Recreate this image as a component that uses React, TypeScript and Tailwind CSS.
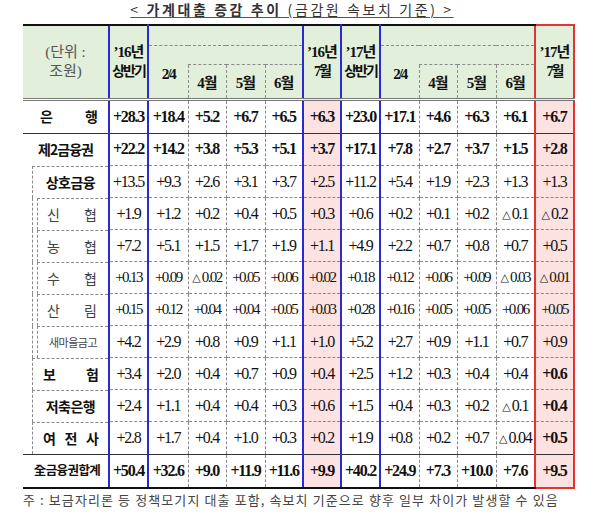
import React from "react";

type Row = {
  level: 0 | 1 | 2;
  kind: "bank" | "mid" | "total";
  boldAll?: boolean;
  boldLast?: boolean;
  small?: boolean;
  label: React.ReactNode;
  v: string[];
};

const rows: Row[] = [
  {
    level: 0,
    kind: "bank",
    boldAll: true,
    label: (
      <div className="flex w-full justify-between pl-[17px] pr-[10px] text-[14px] font-bold text-[#111]">
        <span>은</span>
        <span>행</span>
      </div>
    ),
    v: ["+28.3", "+18.4", "+5.2", "+6.7", "+6.5", "+6.3", "+23.0", "+17.1", "+4.6", "+6.3", "+6.1", "+6.7"],
  },
  {
    level: 0,
    kind: "mid",
    boldAll: true,
    label: <div className="w-full text-center text-[14px] font-bold tracking-[-1px] text-[#111]">제2금융권</div>,
    v: ["+22.2", "+14.2", "+3.8", "+5.3", "+5.1", "+3.7", "+17.1", "+7.8", "+2.7", "+3.7", "+1.5", "+2.8"],
  },
  {
    level: 1,
    kind: "mid",
    label: <div className="w-full text-center text-[14px] font-bold tracking-[-0.5px] text-[#111]">상호금융</div>,
    v: ["+13.5", "+9.3", "+2.6", "+3.1", "+3.7", "+2.5", "+11.2", "+5.4", "+1.9", "+2.3", "+1.3", "+1.3"],
  },
  {
    level: 2,
    kind: "mid",
    label: (
      <div className="flex w-full justify-between pl-[9px] pr-[11px] text-[14px] text-[#444]">
        <span>신</span>
        <span>협</span>
      </div>
    ),
    v: ["+1.9", "+1.2", "+0.2", "+0.4", "+0.5", "+0.3", "+0.6", "+0.2", "+0.1", "+0.2", "△0.1", "△0.2"],
  },
  {
    level: 2,
    kind: "mid",
    label: (
      <div className="flex w-full justify-between pl-[9px] pr-[11px] text-[14px] text-[#444]">
        <span>농</span>
        <span>협</span>
      </div>
    ),
    v: ["+7.2", "+5.1", "+1.5", "+1.7", "+1.9", "+1.1", "+4.9", "+2.2", "+0.7", "+0.8", "+0.7", "+0.5"],
  },
  {
    level: 2,
    kind: "mid",
    small: true,
    label: (
      <div className="flex w-full justify-between pl-[9px] pr-[11px] text-[14px] text-[#444]">
        <span>수</span>
        <span>협</span>
      </div>
    ),
    v: ["+0.13", "+0.09", "△0.02", "+0.05", "+0.06", "+0.02", "+0.18", "+0.12", "+0.06", "+0.09", "△0.03", "△0.01"],
  },
  {
    level: 2,
    kind: "mid",
    small: true,
    label: (
      <div className="flex w-full justify-between pl-[9px] pr-[11px] text-[14px] text-[#444]">
        <span>산</span>
        <span>림</span>
      </div>
    ),
    v: ["+0.15", "+0.12", "+0.04", "+0.04", "+0.05", "+0.03", "+0.28", "+0.16", "+0.05", "+0.05", "+0.06", "+0.05"],
  },
  {
    level: 2,
    kind: "mid",
    label: <div className="w-full text-center text-[11px] tracking-[-0.5px] text-[#444]">새마을금고</div>,
    v: ["+4.2", "+2.9", "+0.8", "+0.9", "+1.1", "+1.0", "+5.2", "+2.7", "+0.9", "+1.1", "+0.7", "+0.9"],
  },
  {
    level: 1,
    kind: "mid",
    boldLast: true,
    label: (
      <div className="flex w-full justify-between pl-[10px] pr-[9px] text-[14px] font-bold text-[#111]">
        <span>보</span>
        <span>험</span>
      </div>
    ),
    v: ["+3.4", "+2.0", "+0.4", "+0.7", "+0.9", "+0.4", "+2.5", "+1.2", "+0.3", "+0.4", "+0.4", "+0.6"],
  },
  {
    level: 1,
    kind: "mid",
    boldLast: true,
    label: <div className="w-full text-center text-[14px] font-bold tracking-[-0.5px] text-[#111]">저축은행</div>,
    v: ["+2.4", "+1.1", "+0.4", "+0.4", "+0.3", "+0.6", "+1.5", "+0.4", "+0.3", "+0.2", "△0.1", "+0.4"],
  },
  {
    level: 1,
    kind: "mid",
    boldLast: true,
    label: (
      <div className="flex w-full justify-between pl-[10px] pr-[9px] text-[14px] font-bold text-[#111]">
        <span>여</span>
        <span>전</span>
        <span>사</span>
      </div>
    ),
    v: ["+2.8", "+1.7", "+0.4", "+1.0", "+0.3", "+0.2", "+1.9", "+0.8", "+0.2", "+0.7", "△0.04", "+0.5"],
  },
  {
    level: 0,
    kind: "total",
    boldAll: true,
    label: <div className="w-full pl-[3px] text-center text-[12.5px] font-bold tracking-[-0.6px] text-[#111]">全금융권합계</div>,
    v: ["+50.4", "+32.6", "+9.0", "+11.9", "+11.6", "+9.9", "+40.2", "+24.9", "+7.3", "+10.0", "+7.6", "+9.5"],
  },
];

// column type per data column: d = dashed, b = blue, r = red
const colType = ["b", "d", "d", "d", "d", "b", "b", "d", "d", "d", "d", "r"];

const cellBorder: Record<string, string> = {
  "bank-d": "[border-style:dashed_dashed_solid_dashed] [border-width:1px] [border-color:#8a8a8a_#8a8a8a_#333_#8a8a8a]",
  "bank-b": "[border-style:dashed_solid_solid_solid] [border-width:1px_2px_1px_2px] [border-color:#8a8a8a_#2a2ad2_#333_#2a2ad2]",
  "bank-r": "[border-style:dashed_solid_solid_solid] [border-width:1px_2px_1px_2px] [border-color:#8a8a8a_#e3342f_#333_#e3342f]",
  "mid-d": "[border-style:dashed] [border-width:1px] [border-color:#8a8a8a]",
  "mid-b": "[border-style:dashed_solid] [border-width:1px_2px] [border-color:#8a8a8a_#2a2ad2]",
  "mid-r": "[border-style:dashed_solid] [border-width:1px_2px] [border-color:#8a8a8a_#e3342f]",
  "total-d": "[border-style:solid_dashed_solid_dashed] [border-width:1px_1px_2px_1px] [border-color:#333_#8a8a8a_#111_#8a8a8a]",
  "total-b": "[border-style:solid] [border-width:1px_2px_2px_2px] [border-color:#333_#2a2ad2_#111_#2a2ad2]",
  "total-r": "[border-style:solid] [border-width:1px_2px_2px_2px] [border-color:#333_#e3342f_#e3342f_#e3342f]",
};

const labelBorder: Record<string, string> = {
  bank: "[border-style:none_none_solid_none] [border-width:0_0_1px_0] [border-color:#333]",
  mid: "",
  total: "[border-style:solid_none_solid_none] [border-width:1px_0_2px_0] [border-color:#333_transparent_#111_transparent]",
};

function LabelBox({ row }: { row: Row }) {
  if (row.level === 0) {
    return <div className="flex h-[32px] items-center">{row.label}</div>;
  }
  if (row.level === 1) {
    return (
      <div className="ml-[9px] flex h-[32px] items-center border-l border-t border-dashed border-[#8a8a8a]">
        {row.label}
      </div>
    );
  }
  return (
    <div className="ml-[9px] h-[32px] border-l border-dashed border-[#8a8a8a]">
      <div className="ml-[4px] flex h-full items-center border-l border-t border-dashed border-[#8a8a8a]">
        {row.label}
      </div>
    </div>
  );
}

function Num({ val }: { val: string }) {
  if (val.startsWith("△")) {
    return (
      <span>
        <span className="mr-[1px] inline-block align-[1px] font-['DejaVu_Sans',sans-serif] text-[11px] font-normal tracking-[0px]">△</span>
        {val.slice(1)}
      </span>
    );
  }
  return <span>{val}</span>;
}

const hdrLabel =
  "bg-[#e2efda] p-0 align-middle font-normal [border-style:solid_none_double_none] [border-width:2px_0_3px_0] [border-color:#111_transparent_#777_transparent]";
const hdrBlue =
  "bg-[#e2efda] p-0 align-middle [border-style:solid_solid_double_solid] [border-width:2px_2px_3px_2px] [border-color:#111_#2a2ad2_#777_#2a2ad2]";
const hdrRed =
  "bg-[#e2efda] p-0 align-middle [border-style:solid_solid_double_solid] [border-width:2px_2px_3px_2px] [border-color:#e3342f_#e3342f_#777_#e3342f]";
const hdrGroupTop =
  "bg-[#e2efda] p-0 [border-style:solid_none_dashed_none] [border-width:2px_0_1px_0] [border-color:#111_transparent_#8a8a8a_transparent]";
const hdrGroupMid =
  "bg-[#e2efda] p-0 [border-style:none_none_dashed_none] [border-width:0_0_1px_0] [border-color:#8a8a8a]";
const hdr24 =
  "bg-[#e2efda] p-0 pt-[4px] align-middle [border-style:none_none_double_none] [border-width:0_0_3px_0] [border-color:#777]";
const hdrMonth =
  "bg-[#e2efda] p-0 pt-[4px] align-middle [border-style:dashed_dashed_double_dashed] [border-width:1px_1px_3px_1px] [border-color:#8a8a8a_#8a8a8a_#777_#8a8a8a]";

function TwoLine({ a, b }: { a: string; b: string }) {
  return (
    <div className="flex flex-col items-center leading-[19px] text-[#111]">
      <span className="text-[15px] font-bold tracking-[-1px]">{a}</span>
      <span className="text-[14px] font-bold tracking-[-2px]">{b}</span>
    </div>
  );
}

function Month({ m }: { m: string }) {
  return <span className="text-[15px] font-bold tracking-[-1px] text-[#111]">{m}</span>;
}

export default function App() {
  return (
    <div className="h-[520px] w-[600px] bg-white font-['Liberation_Serif','Noto_Sans_CJK_KR',serif] text-[#111]">
      <div className="flex h-[24px] w-[584px] justify-center pt-[1px]">
        <span className="font-['Noto_Sans_CJK_KR',sans-serif] text-[14px] leading-[17px] tracking-[2.6px] text-[#333] underline decoration-[#555] underline-offset-[2px]">
          &lt; <span className="font-bold">가계대출 증감 추이</span> (금감원 속보치 기준) &gt;
        </span>
      </div>
      <div className="pl-[23px]">
        <table className="w-[551px] table-fixed border-collapse">
          <colgroup>
            <col className="w-[86px]" />
            <col className="w-[39px]" />
            <col className="w-[40px]" />
            <col className="w-[38px]" />
            <col className="w-[39px]" />
            <col className="w-[38px]" />
            <col className="w-[38px]" />
            <col className="w-[39px]" />
            <col className="w-[39px]" />
            <col className="w-[38px]" />
            <col className="w-[39px]" />
            <col className="w-[39px]" />
            <col className="w-[39px]" />
          </colgroup>
          <thead>
            <tr className="h-[20px]">
              <th rowSpan={3} className={hdrLabel}>
                <div className="flex flex-col items-center text-[15px] leading-[19px] text-[#555]">
                  <span>(단위 :</span>
                  <span>조원)</span>
                </div>
              </th>
              <th rowSpan={3} className={hdrBlue}>
                <TwoLine a="’16년" b="상반기" />
              </th>
              <th colSpan={4} className={hdrGroupTop}></th>
              <th rowSpan={3} className={hdrBlue}>
                <TwoLine a="’16년" b="7월" />
              </th>
              <th rowSpan={3} className={hdrBlue}>
                <TwoLine a="’17년" b="상반기" />
              </th>
              <th colSpan={4} className={hdrGroupTop}></th>
              <th rowSpan={3} className={hdrRed}>
                <TwoLine a="’17년" b="7월" />
              </th>
            </tr>
            <tr className="h-[19px]">
              <th rowSpan={2} className={hdr24}>
                <span className="text-[15px] font-bold tracking-[-2px]">2/4</span>
              </th>
              <th colSpan={3} className={hdrGroupMid}></th>
              <th rowSpan={2} className={hdr24}>
                <span className="text-[15px] font-bold tracking-[-2px]">2/4</span>
              </th>
              <th colSpan={3} className={hdrGroupMid}></th>
            </tr>
            <tr className="h-[35px]">
              <th className={hdrMonth}>
                <Month m="4월" />
              </th>
              <th className={hdrMonth}>
                <Month m="5월" />
              </th>
              <th className={hdrMonth}>
                <Month m="6월" />
              </th>
              <th className={hdrMonth}>
                <Month m="4월" />
              </th>
              <th className={hdrMonth}>
                <Month m="5월" />
              </th>
              <th className={hdrMonth}>
                <Month m="6월" />
              </th>
            </tr>
          </thead>
          <tbody>
            {rows.map((row, ri) => (
              <tr key={ri}>
                <td className={`p-0 align-top font-['Noto_Sans_CJK_KR',sans-serif] ${labelBorder[row.kind]}`}>
                  <LabelBox row={row} />
                </td>
                {row.v.map((val, ci) => {
                  const t = colType[ci];
                  const pink = ci === 5 || ci === 11;
                  const bold = row.boldAll || (row.boldLast && ci === 11);
                  return (
                    <td
                      key={ci}
                      className={`p-0 text-center align-middle leading-none ${cellBorder[row.kind + "-" + t]} ${
                        pink ? "bg-[#fde2e2]" : "bg-white"
                      } ${bold ? "font-bold" : "font-normal"} ${
                        row.small ? "text-[15px] tracking-[-1.6px]" : "text-[16px] tracking-[-1.2px]"
                      }`}
                    >
                      <Num val={val} />
                    </td>
                  );
                })}
              </tr>
            ))}
          </tbody>
        </table>
        <div className="pt-[3px] font-['Noto_Sans_CJK_KR',sans-serif] text-[13px] leading-[16px] tracking-[1.1px] text-[#444]">
          주 : 보금자리론 등 정책모기지 대출 포함, 속보치 기준으로 향후 일부 차이가 발생할 수 있음
        </div>
      </div>
    </div>
  );
}
